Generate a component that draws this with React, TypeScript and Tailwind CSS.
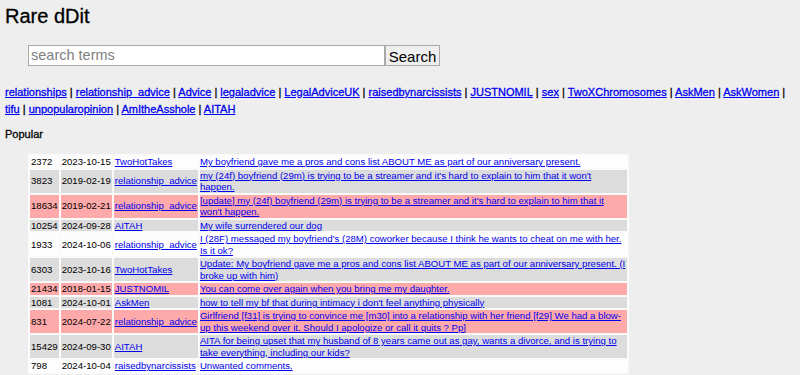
import React from "react";

const SUBS = [
  "relationships",
  "relationship_advice",
  "Advice",
  "legaladvice",
  "LegalAdviceUK",
  "raisedbynarcissists",
  "JUSTNOMIL",
  "sex",
  "TwoXChromosomes",
  "AskMen",
  "AskWomen",
  "tifu",
  "unpopularopinion",
  "AmItheAsshole",
  "AITAH",
];

type Row = { score: number; date: string; sub: string; title: string; tone: "white" | "gray" | "pink" };

const ROWS: Row[] = [
  { score: 2372, date: "2023-10-15", sub: "TwoHotTakes", title: "My boyfriend gave me a pros and cons list ABOUT ME as part of our anniversary present.", tone: "white" },
  { score: 3823, date: "2019-02-19", sub: "relationship_advice", title: "my (24f) boyfriend (29m) is trying to be a streamer and it's hard to explain to him that it won't happen.", tone: "gray" },
  { score: 18634, date: "2019-02-21", sub: "relationship_advice", title: "[update] my (24f) boyfriend (29m) is trying to be a streamer and it's hard to explain to him that it won't happen.", tone: "pink" },
  { score: 10254, date: "2024-09-28", sub: "AITAH", title: "My wife surrendered our dog", tone: "gray" },
  { score: 1933, date: "2024-10-06", sub: "relationship_advice", title: "I (28F) messaged my boyfriend's (28M) coworker because I think he wants to cheat on me with her. Is it ok?", tone: "white" },
  { score: 6303, date: "2023-10-16", sub: "TwoHotTakes", title: "Update: My boyfriend gave me a pros and cons list ABOUT ME as part of our anniversary present. (I broke up with him)", tone: "gray" },
  { score: 21434, date: "2018-01-15", sub: "JUSTNOMIL", title: "You can come over again when you bring me my daughter.", tone: "pink" },
  { score: 1081, date: "2024-10-01", sub: "AskMen", title: "how to tell my bf that during intimacy i don't feel anything physically", tone: "gray" },
  { score: 831, date: "2024-07-22", sub: "relationship_advice", title: "Girlfriend [f31] is trying to convince me [m30] into a relationship with her friend [f29] We had a blow-up this weekend over it. Should I apologize or call it quits ? Pp]", tone: "pink" },
  { score: 15429, date: "2024-09-30", sub: "AITAH", title: "AITA for being upset that my husband of 8 years came out as gay, wants a divorce, and is trying to take everything, including our kids?", tone: "gray" },
  { score: 798, date: "2024-10-04", sub: "raisedbynarcissists", title: "Unwanted comments.", tone: "white" },
];

const TONE: Record<Row["tone"], string> = {
  white: "bg-[#fdfdfd]",
  gray: "bg-[#dcdcdc]",
  pink: "bg-[#ffaaaa]",
};

export default function App() {
  return (
    <div className="min-h-[375px] bg-[#eeeeee] px-[5px] pt-[3px] font-['Liberation_Sans',Arial,sans-serif] text-black">
      <h1 className="text-[20px] leading-[26px] [-webkit-text-stroke:0.3px]">Rare dDit</h1>

      <form className="mt-[16px] ml-[23px] flex h-[21px]" onSubmit={(e) => e.preventDefault()}>
        <input
          type="text"
          placeholder="search terms"
          className="w-[357px] border border-[#a9a9a9] bg-white px-[2px] text-[14.5px] placeholder:text-[#808080] outline-none"
        />
        <button type="submit" className="w-[55px] border border-[#a9a9a9] bg-[#efefef] text-[15px]">
          Search
        </button>
      </form>

      {/* subreddit quick links */}
      <div className="mt-[18px] text-[11px] leading-[17px] [-webkit-text-stroke:0.3px]">
        {SUBS.map((s, i) => (
          <React.Fragment key={s}>
            <a href="#" className="text-[#0000ee] underline">
              {s}
            </a>
            {i < SUBS.length - 1 && "\u00a0| "}
          </React.Fragment>
        ))}
      </div>

      <h2 className="mt-[8px] text-[11px] leading-[16px] [-webkit-text-stroke:0.3px]">Popular</h2>

      <table className="mt-[12px] ml-[23px] w-[601px] border-separate border-spacing-[2px] bg-[#fafafa] text-[9.6px] leading-[11.5px]">
        <tbody>
          {ROWS.map((r) => (
            <tr key={r.score} className={TONE[r.tone]}>
              <td className="px-[1px] align-middle">{r.score}</td>
              <td className="px-[1px] align-middle whitespace-nowrap">{r.date}</td>
              <td className="px-[1px] align-middle whitespace-nowrap">
                <a href="#" className="text-[#0000ee] underline">
                  {r.sub}
                </a>
              </td>
              <td className="align-middle">
                <a href="#" className="text-[#0000ee] underline">
                  {r.title}
                </a>
              </td>
            </tr>
          ))}
        </tbody>
      </table>
    </div>
  );
}
